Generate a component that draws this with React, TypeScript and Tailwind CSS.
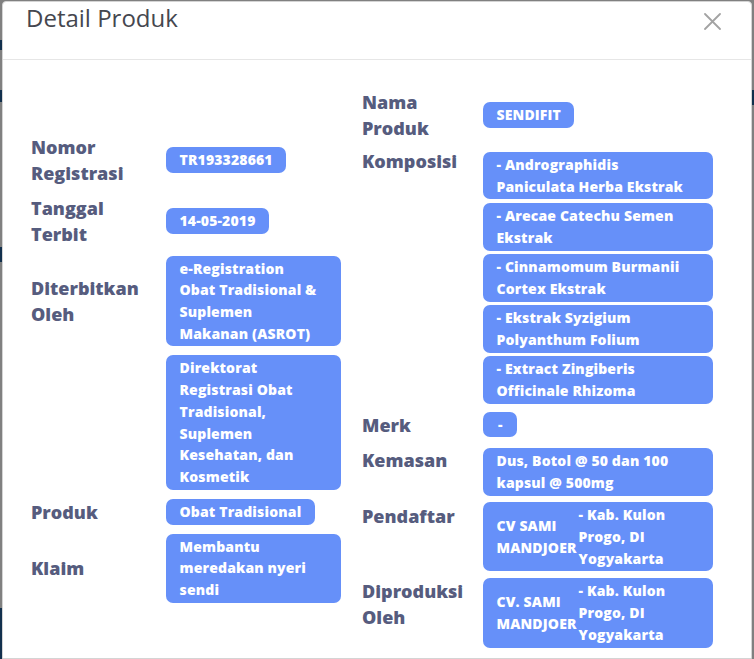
import React from "react";

function Badge({ lines, full }: { lines: string[]; full?: boolean }) {
  return (
    <div
      className={
        full
          ? "block w-full rounded-[7px] bg-[#6690f9] px-[13.5px] py-[2px] text-[14px] font-extrabold leading-[21.7px] tracking-[0.15px] text-white"
          : "inline-block rounded-[7px] bg-[#6690f9] px-[13.5px] py-[2px] text-[14px] font-extrabold leading-[21.7px] tracking-[0.15px] text-white"
      }
    >
      {lines.map((l, i) => (
        <span key={i} className="block whitespace-nowrap">
          {l}
        </span>
      ))}
    </div>
  );
}

function SplitBadge({ a, b }: { a: string[]; b: string[] }) {
  return (
    <div className="flex w-full items-center rounded-[7px] bg-[#6690f9] px-[13.5px] py-[2px] text-[14px] font-extrabold leading-[21.7px] tracking-[0.15px] text-white">
      <div className="w-[82px] shrink-0">
        {a.map((l, i) => (
          <span key={i} className="block whitespace-nowrap">
            {l}
          </span>
        ))}
      </div>
      <div>
        {b.map((l, i) => (
          <span key={i} className="block whitespace-nowrap">
            {l}
          </span>
        ))}
      </div>
    </div>
  );
}

function Label({ lines, w }: { lines: string[]; w: string }) {
  return (
    <div className={w + " shrink-0 text-[18px] font-extrabold leading-[26px] text-[#565c7e]"}>
      {lines.map((l, i) => (
        <span key={i} className="block whitespace-nowrap">
          {l}
        </span>
      ))}
    </div>
  );
}

export default function App() {
  return (
    <div
      className="flex h-[659px] w-[754px] overflow-hidden bg-[#808080]"
      style={{ fontFamily: '"Open Sans", "Liberation Sans", sans-serif' }}
    >
      {/* left background strip */}
      <div className="flex w-[2px] shrink-0 flex-col">
        <div className="h-[40px]" />
        <div className="h-[10px] bg-[#12304d]" />
        <div className="h-[40px]" />
        <div className="h-[12px] bg-[#12304d]" />
        <div className="h-[145px]" />
        <div className="h-[15px] bg-[#12304d]" />
        <div className="h-[346px]" />
        <div className="flex-1 bg-[#12304d]" />
      </div>

      {/* modal */}
      <div className="mt-[1px] flex min-w-0 flex-1 flex-col rounded-t-[4px] border border-[#d4d4d4] bg-white">
        {/* header */}
        <div className="flex h-[58px] shrink-0 items-start justify-between border-b border-[#e6e6e6] pl-[23px] pr-[30px]">
          <div className="text-[24px] font-normal leading-[32px] text-[#45474f]">Detail Produk</div>
          <svg className="mt-[11px]" width="17" height="17" viewBox="0 0 17 17" fill="none">
            <path d="M1 1L16 16M16 1L1 16" stroke="#a3a3a3" strokeWidth="1.8" strokeLinecap="round" />
          </svg>
        </div>

        {/* body */}
        <div className="flex items-center gap-[21px] pl-[28px] pt-[29px]">
          {/* left column */}
          <div className="flex w-[310px] shrink-0 flex-col gap-[9px]">
            <div className="flex items-center">
              <Label w="w-[135px]" lines={["Nomor", "Registrasi"]} />
              <div className="w-[175px]">
                <Badge lines={["TR193328661"]} />
              </div>
            </div>
            <div className="flex items-center">
              <Label w="w-[135px]" lines={["Tanggal", "Terbit"]} />
              <div className="w-[175px]">
                <Badge lines={["14-05-2019"]} />
              </div>
            </div>
            <div className="flex items-center">
              <Label w="w-[135px]" lines={["Diterbitkan", "Oleh"]} />
              <div className="w-[175px]">
                <Badge full lines={["e-Registration", "Obat Tradisional &", "Suplemen", "Makanan (ASROT)"]} />
              </div>
            </div>
            <div className="flex items-center">
              <Label w="w-[135px]" lines={[]} />
              <div className="w-[175px]">
                <Badge
                  full
                  lines={["Direktorat", "Registrasi Obat", "Tradisional,", "Suplemen", "Kesehatan, dan", "Kosmetik"]}
                />
              </div>
            </div>
            <div className="flex items-center">
              <Label w="w-[135px]" lines={["Produk"]} />
              <div className="w-[175px]">
                <Badge lines={["Obat Tradisional"]} />
              </div>
            </div>
            <div className="flex items-center">
              <Label w="w-[135px]" lines={["Klaim"]} />
              <div className="w-[175px]">
                <Badge full lines={["Membantu", "meredakan nyeri", "sendi"]} />
              </div>
            </div>
          </div>

          {/* right column */}
          <div className="flex w-[351px] shrink-0 flex-col">
            <div className="flex items-center">
              <Label w="w-[121px]" lines={["Nama", "Produk"]} />
              <div className="w-[230px]">
                <Badge lines={["SENDIFIT"]} />
              </div>
            </div>
            <div className="mt-[7px] flex items-start">
              <Label w="w-[121px]" lines={["Komposisi"]} />
              <div className="flex w-[230px] flex-col gap-[3.7px] pt-[4px]">
                <Badge full lines={["- Andrographidis", "Paniculata Herba Ekstrak"]} />
                <Badge full lines={["- Arecae Catechu Semen", "Ekstrak"]} />
                <Badge full lines={["- Cinnamomum Burmanii", "Cortex Ekstrak"]} />
                <Badge full lines={["- Ekstrak Syzigium", "Polyanthum Folium"]} />
                <Badge full lines={["- Extract Zingiberis", "Officinale Rhizoma"]} />
              </div>
            </div>
            <div className="mt-[8px] flex items-start">
              <Label w="w-[121px]" lines={["Merk"]} />
              <div className="w-[230px]">
                <div className="inline-block rounded-[7px] bg-[#6690f9] px-[15px] py-[2px] text-[14px] font-extrabold leading-[21.7px] text-white">
                  -
                </div>
              </div>
            </div>
            <div className="mt-[9px] flex items-start">
              <Label w="w-[121px]" lines={["Kemasan"]} />
              <div className="w-[230px] pt-[1.5px]">
                <Badge full lines={["Dus, Botol @ 50 dan 100", "kapsul @ 500mg"]} />
              </div>
            </div>
            <div className="mt-[6.6px] flex items-start">
              <div className="pt-[1.2px]">
                <Label w="w-[121px]" lines={["Pendaftar"]} />
              </div>
              <div className="w-[230px]">
                <SplitBadge a={["CV SAMI", "MANDJOER"]} b={["- Kab. Kulon", "Progo, DI", "Yogyakarta"]} />
              </div>
            </div>
            <div className="mt-[7px] flex items-start">
              <Label w="w-[121px]" lines={["Diproduksi", "Oleh"]} />
              <div className="w-[230px]">
                <SplitBadge a={["CV. SAMI", "MANDJOER"]} b={["- Kab. Kulon", "Progo, DI", "Yogyakarta"]} />
              </div>
            </div>
          </div>
        </div>
      </div>

      {/* right background strip */}
      <div className="flex w-[2px] shrink-0 flex-col">
        <div className="h-[90px]" />
        <div className="h-[15px] bg-[#12304d]" />
      </div>
    </div>
  );
}
